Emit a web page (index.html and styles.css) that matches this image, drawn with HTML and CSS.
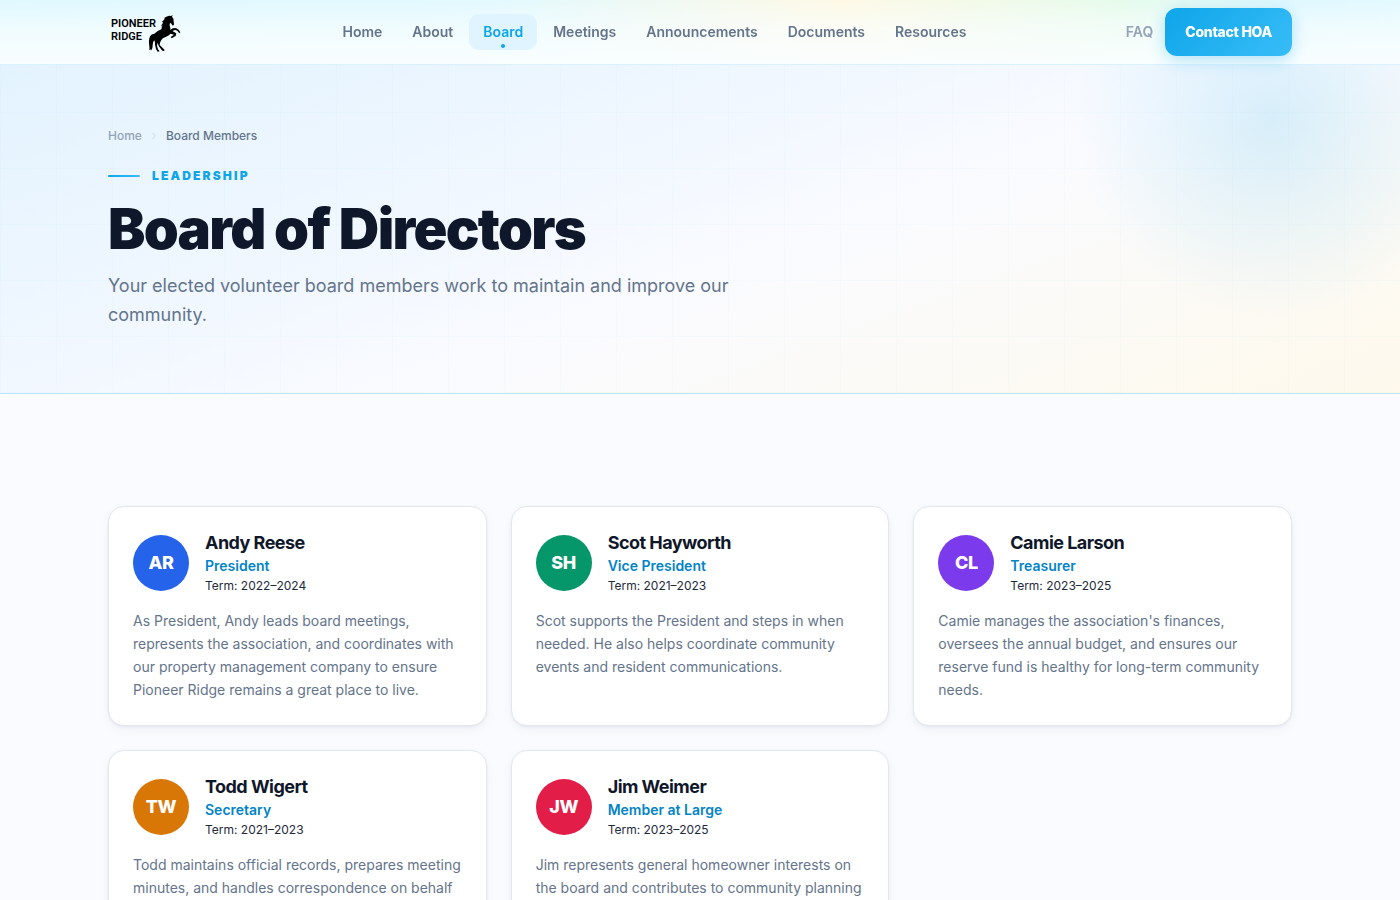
FILE: index.html
```html
<!DOCTYPE html>
<html lang="en">
<head>
    <meta charset="UTF-8">
    <meta name="viewport" content="width=device-width, initial-scale=1.0">
    <title>Board of Directors - Pioneer Ridge</title>
    <link rel="stylesheet" href="styles.css">
</head>
<body>
    <header class="site-header">
        <div class="container header-inner">
            <a href="/" class="logo" aria-label="Pioneer Ridge home">
                <svg width="75" height="48" viewBox="0 0 75 48" aria-hidden="true">
                    <text class="logo-text" x="3" y="19">PIONEER</text>
                    <text class="logo-text" x="3" y="32">RIDGE</text>
                    <!-- horse -->
                    <g transform="translate(-8 -3) scale(.3333)">
                        <path d="M218 30 L216 35 Q222 40 221 49 L222 58 Q221 63 217 61 L212 53 Q208 55 209 62 Q212 69 211 75 Q219 67 229 70 Q237 73 241 82 L238 85 Q233 76 227 75 Q221 75 218 79 L229 85 L227 93 L215 100 L212 96 L222 89 L212 86 Q207 92 197 96 Q187 99 184 105 Q179 112 179 120 L186 127 L194 135 L192 138 L187 137 L176 123 L173 113 L171 122 L174 133 L179 139 L173 140 L168 132 L165 119 Q166 112 163 106 Q157 111 158 121 Q159 131 153 137 L152 133 L148 136 Q149 131 148 124 Q145 105 150 94 Q154 87 163 86 Q171 78 184 73 Q188 66 184 67 L188 61 L182 63 Q189 57 189 51 L185 51 Q192 46 195 40 L191 40 Q199 34 207 32 L213 33 Z"/>
                    </g>
                </svg>
            </a>
            <nav class="main-nav" aria-label="Main">
                <a href="/">Home</a>
                <a href="/about">About</a>
                <a href="/board" class="active" aria-current="page">Board</a>
                <a href="/meetings">Meetings</a>
                <a href="/announcements">Announcements</a>
                <a href="/documents">Documents</a>
                <a href="/resources">Resources</a>
            </nav>
            <div class="header-actions">
                <a href="/faq" class="faq-link">FAQ</a>
                <a href="/contact" class="btn-contact">Contact HOA</a>
            </div>
        </div>
    </header>

    <section class="page-hero">
        <div class="container hero-content">
            <nav class="breadcrumb" aria-label="Breadcrumb">
                <a href="/">Home</a>
                <svg width="12" height="12" viewBox="0 0 24 24" fill="none" stroke="currentColor" stroke-width="2" stroke-linecap="round" stroke-linejoin="round" aria-hidden="true"><path d="M9 18l6-6-6-6"/></svg>
                <span>Board Members</span>
            </nav>
            <p class="eyebrow">Leadership</p>
            <h1>Board of Directors</h1>
            <p class="hero-text">Your elected volunteer board members work to maintain and improve our community.</p>
        </div>
    </section>

    <main class="section">
        <div class="container board-grid">
            <article class="card">
                <div class="card-head">
                    <div class="avatar blue">AR</div>
                    <div>
                        <h2>Andy Reese</h2>
                        <p class="role">President</p>
                        <p class="term">Term: 2022–2024</p>
                    </div>
                </div>
                <p class="bio">As President, Andy leads board meetings, represents the association, and coordinates with our property management company to ensure Pioneer Ridge remains a great place to live.</p>
            </article>
            <article class="card">
                <div class="card-head">
                    <div class="avatar green">SH</div>
                    <div>
                        <h2>Scot Hayworth</h2>
                        <p class="role">Vice President</p>
                        <p class="term">Term: 2021–2023</p>
                    </div>
                </div>
                <p class="bio">Scot supports the President and steps in when needed. He also helps coordinate community events and resident communications.</p>
            </article>
            <article class="card">
                <div class="card-head">
                    <div class="avatar purple">CL</div>
                    <div>
                        <h2>Camie Larson</h2>
                        <p class="role">Treasurer</p>
                        <p class="term">Term: 2023–2025</p>
                    </div>
                </div>
                <p class="bio">Camie manages the association's finances, oversees the annual budget, and ensures our reserve fund is healthy for long-term community needs.</p>
            </article>
            <article class="card">
                <div class="card-head">
                    <div class="avatar orange">TW</div>
                    <div>
                        <h2>Todd Wigert</h2>
                        <p class="role">Secretary</p>
                        <p class="term">Term: 2021–2023</p>
                    </div>
                </div>
                <p class="bio">Todd maintains official records, prepares meeting minutes, and handles correspondence on behalf of the board.</p>
            </article>
            <article class="card">
                <div class="card-head">
                    <div class="avatar red">JW</div>
                    <div>
                        <h2>Jim Weimer</h2>
                        <p class="role">Member at Large</p>
                        <p class="term">Term: 2023–2025</p>
                    </div>
                </div>
                <p class="bio">Jim represents general homeowner interests on the board and contributes to community planning and events.</p>
            </article>
        </div>
    </main>
</body>
</html>
```

FILE: styles.css
```css
* {
    box-sizing: border-box;
    margin: 0;
    padding: 0;
}
body {
    font-family: Inter, "Liberation Sans", sans-serif;
    font-size: 16px;
    color: #0f172a;
    background: #fafbff;
}
a {
    text-decoration: none;
}
.container {
    max-width: 1280px;
    margin: 0 auto;
    padding: 0 48px;
}

/* Header */
.site-header {
    position: fixed;
    top: 0;
    left: 0;
    right: 0;
    z-index: 10;
    border-bottom: 1px solid #d9f2fe;
    background:
        linear-gradient(to bottom, rgba(250, 254, 255, 0) 0, rgba(250, 254, 255, 0.6) 28px, rgba(250, 254, 255, 0.95) 64px),
        linear-gradient(to right, #dff8ff 0%, #e2f9ff 35%, #fef9e6 60%, #e6fbec 80%, #dff8ff 92%, #e2f9ff 100%);
}
.header-inner {
    display: flex;
    align-items: center;
    justify-content: space-between;
    height: 64px;
}
.logo,
.logo svg {
    display: block;
}
.logo-text {
    font-family: Roboto, sans-serif;
    font-size: 11px;
    font-weight: 600;
}
.main-nav {
    display: flex;
    gap: 2px;
}
.main-nav a {
    position: relative;
    padding: 0 14px;
    border-radius: 10px;
    font-size: 14px;
    font-weight: 600;
    line-height: 36px;
    color: #64748b;
}
.main-nav a.active {
    color: #0ea5e9;
    background: #dff4fe;
}
.main-nav a.active::after {
    content: "";
    position: absolute;
    left: 50%;
    bottom: 2px;
    width: 4px;
    height: 4px;
    margin-left: -2px;
    border-radius: 50%;
    background: #0ea5e9;
}
.header-actions {
    display: flex;
    align-items: center;
    gap: 12px;
}
.faq-link {
    font-size: 14px;
    font-weight: 600;
    line-height: 36px;
    color: #94a3b8;
}
.btn-contact {
    padding: 0 20px;
    border-radius: 12px;
    font-size: 14px;
    font-weight: 800;
    line-height: 48px;
    letter-spacing: -0.02em;
    color: #fff;
    background: linear-gradient(135deg, #0ea5e9, #38bdf8);
    box-shadow: 0 4px 16px rgba(14, 165, 233, 0.3);
}

/* Page hero, runs under the header */
.page-hero {
    position: relative;
    overflow: hidden;
    padding: 126px 0 64px;
    border-bottom: 1px solid #bae6fd;
    background: linear-gradient(160deg, #e0f2fe 0%, #f0f7ff 40%, #fafbff 60%, #fef9ec 100%);
}
.page-hero::before {
    content: "";
    position: absolute;
    inset: 0;
    background-image:
        linear-gradient(rgba(14, 165, 233, 0.02) 1px, transparent 1px),
        linear-gradient(90deg, rgba(14, 165, 233, 0.02) 1px, transparent 1px);
    background-size: 56px 56px;
}
.page-hero::after {
    content: "";
    position: absolute;
    top: -80px;
    right: -72px;
    width: 400px;
    height: 400px;
    border-radius: 50%;
    background: radial-gradient(circle, rgba(14, 165, 233, 0.15), transparent 70%);
}
.hero-content {
    position: relative;
    z-index: 1;
}
.breadcrumb {
    display: flex;
    align-items: center;
    gap: 6px;
    margin-bottom: 20px;
    font-size: 12px;
    font-weight: 500;
    line-height: 20px;
    color: #64748b;
}
.breadcrumb a {
    color: #94a3b8;
}
.breadcrumb svg {
    color: #cbd5e1;
}
.eyebrow {
    display: flex;
    align-items: center;
    gap: 12px;
    margin-bottom: 12px;
    font-size: 12px;
    font-weight: 900;
    line-height: 20px;
    letter-spacing: 0.18em;
    text-transform: uppercase;
    color: #0ea5e9;
}
.eyebrow::before {
    content: "";
    width: 32px;
    height: 2px;
    border-radius: 2px;
    background: linear-gradient(90deg, #0ea5e9, #38bdf8);
}
h1 {
    margin-bottom: 10px;
    font-size: 56px;
    font-weight: 900;
    line-height: 63px;
    letter-spacing: -0.03em;
}
.hero-text {
    max-width: 640px;
    font-size: 18px;
    line-height: 29px;
    color: #64748b;
}

/* Board members */
.section {
    padding: 112px 0;
}
.board-grid {
    display: grid;
    grid-template-columns: repeat(3, 1fr);
    gap: 24px;
}
.card {
    padding: 24px;
    border: 1px solid #e2e8f0;
    border-radius: 16px;
    background: #fff;
    box-shadow: 0 1px 3px rgba(15, 23, 42, 0.06), 0 4px 12px rgba(15, 23, 42, 0.04);
}
.card-head {
    display: flex;
    align-items: center;
    gap: 16px;
    margin-bottom: 14px;
}
.avatar {
    flex-shrink: 0;
    width: 56px;
    height: 56px;
    border-radius: 50%;
    font-size: 18px;
    font-weight: 800;
    line-height: 56px;
    letter-spacing: -0.02em;
    text-align: center;
    color: #fff;
}
.blue {
    background: #2563eb;
}
.green {
    background: #059669;
}
.purple {
    background: #7c3aed;
}
.orange {
    background: #d97706;
}
.red {
    background: #e11d48;
}
.card h2 {
    font-size: 18px;
    font-weight: 700;
    line-height: 24px;
    letter-spacing: -0.03em;
}
.role {
    font-size: 14px;
    font-weight: 600;
    line-height: 22px;
    color: #0284c7;
}
.term {
    font-size: 12px;
    line-height: 18px;
    color: #1e293b;
}
.bio {
    font-size: 14px;
    line-height: 23px;
    color: #64748b;
}

@media (max-width: 1000px) {
    .main-nav {
        display: none;
    }
    .board-grid {
        grid-template-columns: 1fr;
    }
}
```
